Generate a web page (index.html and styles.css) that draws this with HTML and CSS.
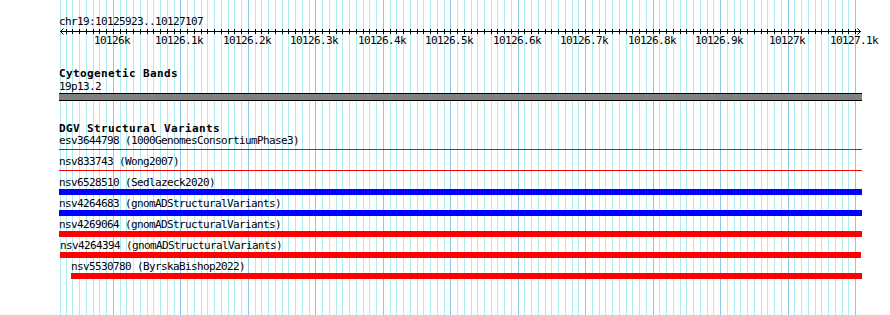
FILE: index.html
```html
<!DOCTYPE html>
<html lang="en">
<head>
  <meta charset="UTF-8" />
  <title>chr19:10125923..10127107</title>
  <link rel="stylesheet" href="styles.css">
</head>
<body>

<div class="view">
  <svg class="grid" id="grid" width="803" height="315"></svg>

  <div class="ruler">
    <div class="locus">chr19:10125923..10127107</div>
    <svg class="axis" id="axis" width="803" height="6">
      <rect x="1" y="3" width="801" height="1" fill="#000" />
      <polyline points="4.5,0.5 1.5,3.5 4.5,6.5" />
      <polyline points="798.5,0.5 801.5,3.5 798.5,6.5" />
    </svg>
    <div class="tick-labels" id="tick-labels"></div>
  </div>

  <section class="track cyto">
    <div class="track-title">Cytogenetic Bands</div>
    <div class="band-name">19p13.2</div>
    <div class="band"></div>
  </section>

  <section class="track dgv">
    <div class="track-title">DGV Structural Variants</div>
    <div id="features"></div>
  </section>
</div>

<script>
  const origin = 10125920;   // bp at the left edge of the view
  const scale = 0.6746;      // px per bp
  const viewWidth = 803;
  const svgNS = 'http://www.w3.org/2000/svg';

  const toX = bp => Math.round((bp - origin) * scale);

  function rect(parent, x, y, w, h, fill) {
    const r = document.createElementNS(svgNS, 'rect');
    r.setAttribute('x', x);
    r.setAttribute('y', y);
    r.setAttribute('width', w);
    r.setAttribute('height', h);
    r.setAttribute('fill', fill);
    parent.appendChild(r);
  }

  const grid = document.getElementById('grid');
  const axis = document.getElementById('axis');
  const tickLabels = document.getElementById('tick-labels');

  // block edge
  rect(grid, 1, 0, 1, 315, '#aeecf0');

  for (let bp = 10125930; bp <= 10127100; bp += 10) {
    const x = toX(bp);
    const major = bp % 100 === 0;
    rect(grid, x, 0, 1, 315, major ? '#8cc8ea' : '#aeecf0');
    rect(axis, x, 1, 1, 5, '#000');
    if (major) {
      const label = document.createElement('span');
      label.className = 'tick-label';
      label.style.left = x + 'px';
      label.textContent = +(bp / 1000).toFixed(1) + 'k';
      tickLabels.appendChild(label);
    }
  }

  const features = [
    { name: 'esv3644798', src: '1000GenomesConsortiumPhase3', glyph: 'line', color: 'red', start: 10125900, end: 10127200 },
    { name: 'nsv833743', src: 'Wong2007', glyph: 'line', color: 'red', start: 10125900, end: 10127200 },
    { name: 'nsv6528510', src: 'Sedlazeck2020', glyph: 'bar', color: 'blue', start: 10125900, end: 10127200 },
    { name: 'nsv4264683', src: 'gnomADStructuralVariants', glyph: 'bar', color: 'blue', start: 10125900, end: 10127200 },
    { name: 'nsv4269064', src: 'gnomADStructuralVariants', glyph: 'bar', color: 'red', start: 10125900, end: 10127200 },
    { name: 'nsv4264394', src: 'gnomADStructuralVariants', glyph: 'bar', color: 'red', start: 10125922, end: 10127109 },
    { name: 'nsv5530780', src: 'ByrskaBishop2022', glyph: 'bar', color: 'red', start: 10125938, end: 10127200 }
  ];

  document.getElementById('features').innerHTML = features.map(f => {
    const x1 = Math.max(0, toX(f.start));
    const x2 = Math.min(viewWidth, toX(f.end));
    return `
      <div class="feature" style="margin-left:${x1}px;width:${x2 - x1}px">
        <div class="feature-label">${f.name} (${f.src})</div>
        <div class="glyph ${f.glyph} ${f.color}"></div>
      </div>
    `;
  }).join('');
</script>

</body>
</html>
```

FILE: styles.css
```css
  body {
    margin: 0;
    background: #fff;
    color: #000;
    font-family: "DejaVu Sans Mono", "Liberation Mono", monospace;
    font-size: 11px;
    letter-spacing: -0.62px;
  }
  .view {
    position: relative;
    width: 803px;
    height: 315px;
    margin-left: 59px;
  }
  .grid {
    position: absolute;
    left: 0;
    top: 0;
    shape-rendering: crispEdges;
  }

  /* Ruler */
  .ruler {
    position: relative;
    padding-top: 15px;
  }
  .locus {
    line-height: 13px;
    white-space: nowrap;
  }
  .axis {
    display: block;
    overflow: visible;
  }
  .axis rect {
    shape-rendering: crispEdges;
  }
  .axis polyline {
    fill: none;
    stroke: #000;
    stroke-width: 1;
  }
  .tick-labels {
    position: relative;
    height: 13px;
    line-height: 13px;
  }
  .tick-label {
    position: absolute;
    top: 0;
    margin-left: -1px;
    transform: translateX(-50%);
    white-space: nowrap;
  }

  /* Tracks */
  .track {
    position: relative;
    margin-top: 22px;
  }
  .cyto {
    margin-top: 21px;
  }
  .track-title {
    font-weight: bold;
    letter-spacing: 0.38px;
    line-height: 11px;
    white-space: nowrap;
  }
  .cyto .track-title {
    margin-bottom: 1px;
  }
  .band-name {
    line-height: 13px;
  }
  .band {
    height: 6px;
    background: #808080;
    border-top: 1px solid #000;
    border-bottom: 1px solid #000;
  }

  .feature {
    padding-bottom: 2px;
  }
  .feature-label {
    line-height: 13px;
    white-space: nowrap;
  }
  .glyph.bar {
    height: 6px;
  }
  .glyph.line {
    height: 1px;
    margin: 2px 0 3px;
  }
  .glyph.red {
    background: #f00;
  }
  .glyph.blue {
    background: #00f;
  }
```
